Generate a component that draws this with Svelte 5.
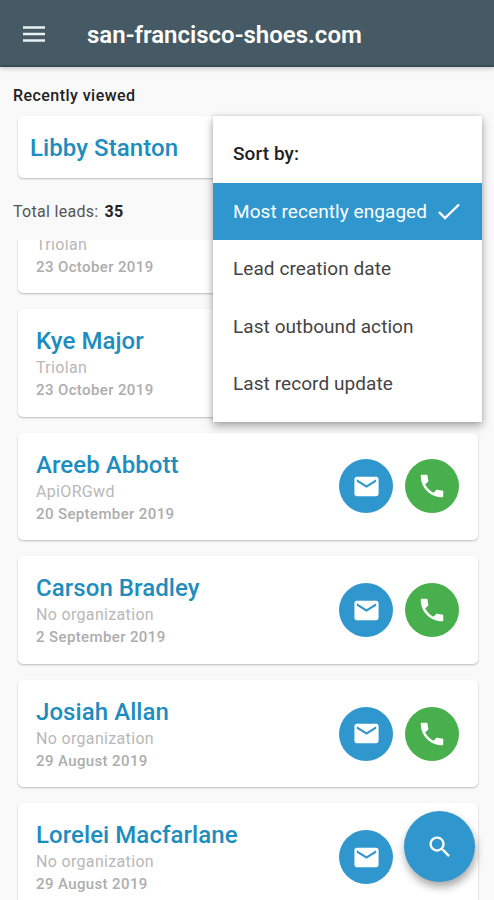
<script lang="ts">
	const leads = [
		{ name: '', organization: 'Triolan', date: '23 October 2019', phone: true },
		{ name: 'Kye Major', organization: 'Triolan', date: '23 October 2019', phone: true },
		{ name: 'Areeb Abbott', organization: 'ApiORGwd', date: '20 September 2019', phone: true },
		{ name: 'Carson Bradley', organization: 'No organization', date: '2 September 2019', phone: true },
		{ name: 'Josiah Allan', organization: 'No organization', date: '29 August 2019', phone: true },
		{ name: 'Lorelei Macfarlane', organization: 'No organization', date: '29 August 2019', phone: false }
	];

	const sortOptions = [
		'Most recently engaged',
		'Lead creation date',
		'Last outbound action',
		'Last record update'
	];

	let selected = $state(sortOptions[0]);
</script>

<div class="screen">
	<header class="app-bar">
		<button class="menu-button" aria-label="Menu">
			<svg width="24" height="18" viewBox="0 0 24 18" fill="none" stroke="currentColor" stroke-width="2.5">
				<path d="M1 2.5h22M1 9h22M1 15.5h22" />
			</svg>
		</button>
		<h1>san-francisco-shoes.com</h1>
	</header>

	<h2 class="section-title">Recently viewed</h2>
	<div class="card recent">
		<div class="lead-name">Libby Stanton</div>
	</div>

	<div class="total">
		<span>Total leads:</span>
		<strong>35</strong>
	</div>

	<div class="list">
		<div class="list-inner">
			{#each leads as lead}
				<div class="card lead">
					<div class="lead-info">
						<div class="lead-name">{lead.name}</div>
						<div class="organization">{lead.organization}</div>
						<div class="date">{lead.date}</div>
					</div>
					<div class="actions">
						<button class="round mail" aria-label="Send email">
							<svg width="29" height="29" viewBox="0 0 24 24" fill="currentColor">
								<path d="M20 4H4c-1.1 0-1.99.9-1.99 2L2 18c0 1.1.9 2 2 2h16c1.1 0 2-.9 2-2V6c0-1.1-.9-2-2-2zm0 4l-8 5-8-5V6l8 5 8-5v2z" />
							</svg>
						</button>
						{#if lead.phone}
							<button class="round call" aria-label="Call">
								<svg width="30" height="30" viewBox="0 0 24 24" fill="currentColor">
									<path d="M6.62 10.79c1.44 2.83 3.76 5.14 6.59 6.59l2.2-2.2c.27-.27.67-.36 1.02-.24 1.12.37 2.33.57 3.57.57.55 0 1 .45 1 1V20c0 .55-.45 1-1 1-9.39 0-17-7.61-17-17 0-.55.45-1 1-1h3.5c.55 0 1 .45 1 1 0 1.25.2 2.45.57 3.57.11.35.03.74-.25 1.02l-2.2 2.2z" />
								</svg>
							</button>
						{/if}
					</div>
				</div>
			{/each}
		</div>
	</div>

	<div class="sort-menu">
		<div class="sort-title">Sort by:</div>
		{#each sortOptions as option}
			<button class="sort-option" class:selected={option === selected} onclick={() => (selected = option)}>
				{option}
				{#if option === selected}
					<svg width="22" height="17" viewBox="0 0 22 17" fill="none" stroke="currentColor" stroke-width="2.4">
						<path d="M1 9l6 6L21 1.5" />
					</svg>
				{/if}
			</button>
		{/each}
	</div>

	<button class="search" aria-label="Search">
		<svg width="28" height="28" viewBox="0 0 24 24" fill="currentColor">
			<path d="M15.5 14h-.79l-.28-.27C15.41 12.59 16 11.11 16 9.5 16 5.91 13.09 3 9.5 3S3 5.91 3 9.5 5.91 16 9.5 16c1.61 0 3.09-.59 4.23-1.57l.27.28v.79l5 4.99L20.49 19l-4.99-5zm-6 0C7.01 14 5 11.99 5 9.5S7.01 5 9.5 5 14 7.01 14 9.5 11.99 14 9.5 14z" />
		</svg>
	</button>
</div>

<style>
	:global(body) {
		background: #f9f9f9;
	}

	.screen {
		position: relative;
		display: flex;
		flex-direction: column;
		width: 494px;
		height: 900px;
		overflow: hidden;
		background: #f9f9f9;
		font-family: Roboto, sans-serif;
		color: #222;
	}

	button {
		padding: 0;
		border: none;
		font-family: inherit;
		cursor: pointer;
	}

	h1,
	h2 {
		margin: 0;
	}

	.app-bar {
		display: flex;
		align-items: center;
		flex-shrink: 0;
		box-sizing: border-box;
		height: 67px;
		padding: 3px 22px 0;
		background: #455a64;
		border-bottom: 2px solid #394b56;
		box-shadow: 0 1px 5px rgba(0, 0, 0, 0.25);
		color: #fff;
	}

	.menu-button {
		display: flex;
		width: 24px;
		margin-right: 41px;
		background: none;
		color: #e9f0f2;
	}

	h1 {
		padding-top: 1px;
		font-size: 24px;
		font-weight: 600;
		line-height: 32px;
	}

	.section-title {
		margin: 19px 13px 10px;
		font-size: 16px;
		font-weight: 500;
		line-height: 20px;
		letter-spacing: 0.45px;
	}

	.card {
		flex-shrink: 0;
		box-sizing: border-box;
		margin: 0 16px 0 18px;
		background: #fff;
		border-radius: 5px;
		box-shadow: 0 1px 2px rgba(0, 0, 0, 0.25);
	}

	.recent {
		height: 62px;
		padding: 16px 12px 14px;
	}

	.lead-name {
		min-height: 32px;
		font-size: 24px;
		font-weight: 500;
		line-height: 32px;
		letter-spacing: 0.07px;
		color: #1d8dc0;
	}

	.total {
		display: flex;
		gap: 6px;
		margin: 24px 13px 18px;
		font-size: 16px;
		line-height: 20px;
		letter-spacing: 0.3px;
		color: #555;
	}

	.total strong {
		font-weight: 700;
		color: #222;
	}

	.list {
		flex: 1;
		min-height: 0;
		overflow: hidden;
	}

	.list-inner {
		display: flex;
		flex-direction: column;
		gap: 16px;
		margin-top: -54.5px;
	}

	.lead {
		display: flex;
		align-items: center;
		height: 107.6px;
		padding: 0 19px 0 18px;
	}

	.lead-info {
		flex: 1;
		align-self: flex-start;
		padding-top: 16px;
	}

	.organization,
	.date {
		font-size: 16px;
		line-height: 22px;
		color: #b8b8b8;
	}

	.organization {
		letter-spacing: 0.33px;
	}

	.date {
		font-size: 15px;
		font-weight: 500;
		letter-spacing: 0.38px;
		color: #adadad;
	}

	.actions {
		display: flex;
		gap: 12px;
		width: 120px;
	}

	.round {
		display: flex;
		align-items: center;
		justify-content: center;
		width: 54px;
		height: 54px;
		border-radius: 50%;
		color: #fff;
	}

	.mail {
		background: #3097ce;
	}

	.call {
		background: #47af4c;
	}

	.sort-menu {
		position: absolute;
		top: 116px;
		left: 213px;
		width: 269px;
		height: 306px;
		background: #fff;
		box-shadow: 0 4px 9px rgba(0, 0, 0, 0.33), 0 0 4px rgba(0, 0, 0, 0.1);
	}

	.sort-title {
		padding: 27px 20px 18px;
		font-size: 19px;
		font-weight: 500;
		line-height: 22px;
		letter-spacing: 0.08px;
	}

	.sort-option {
		display: flex;
		align-items: center;
		justify-content: space-between;
		width: 100%;
		height: 57.3px;
		padding: 0 22px 0 20px;
		background: none;
		font-size: 19px;
		letter-spacing: 0.07px;
		text-align: left;
		color: #444;
	}

	.sort-option.selected {
		background: #3097ce;
		color: #fff;
	}

	.search {
		position: absolute;
		right: 19px;
		bottom: 18px;
		display: flex;
		align-items: center;
		justify-content: center;
		width: 71px;
		height: 71px;
		border-radius: 50%;
		background: #3097ce;
		box-shadow: 1px 5px 8px rgba(0, 0, 0, 0.35);
		color: #fff;
	}
</style>
